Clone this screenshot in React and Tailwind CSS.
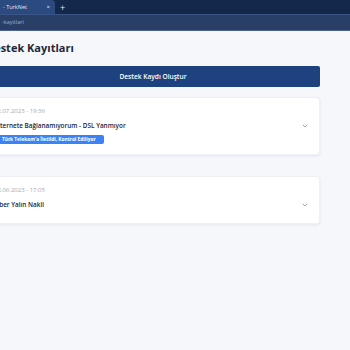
import React from 'react';
import { ChevronDown } from 'lucide-react';

// Destek kayıtları listesi
const tickets = [
    {
        date: '12.07.2023 - 19:36',
        title: 'İnternete Bağlanamıyorum - DSL Yanmıyor',
        status: "Türk Telekom'a İletildi, Kontrol Ediliyor",
    },
    {
        date: '28.06.2023 - 17:05',
        title: 'Fiber Yalın Nakil',
    },
];

const TicketCard = ({ ticket }) => (
    <div
        className={
            ticket.status
                ? 'bg-white rounded-[3px] shadow-[0_1px_3px_rgba(15,23,42,0.08)] border border-[#eef0f5] pl-[7px] pr-[10px] pt-[9px] pb-[10px] flex flex-col'
                : 'bg-white rounded-[3px] shadow-[0_1px_3px_rgba(15,23,42,0.08)] border border-[#eef0f5] pl-[7px] pr-[10px] pt-[9px] pb-[14px] flex flex-col'
        }
    >
        <span className="text-[6px] leading-[8px] text-[#a3a9b6]">{ticket.date}</span>
        <div className="mt-[6px] flex items-center">
            <span className="flex-1 text-[6.4px] leading-[9px] font-semibold text-[#1c2431]">{ticket.title}</span>
            <ChevronDown className="w-[8px] h-[8px] text-[#8b93a3]" strokeWidth={2.5} />
        </div>
        {ticket.status && (
            <span className="mt-[5px] self-start bg-[#3b82f6] text-white text-[4.8px] font-bold leading-[9px] px-[8px] rounded-[2px]">
                {ticket.status}
            </span>
        )}
    </div>
);

const App = () => {
    return (
        <div className="w-[350px] h-[350px] overflow-hidden bg-[#f6f7fb] font-['Open_Sans',sans-serif]">
            {/* Sekme çubuğu */}
            <div className="h-[14px] bg-[#14284c] flex items-end">
                <div className="h-[14px] w-[55px] bg-[#2a4a80] rounded-tr-[4px] flex items-center pl-[3px] pr-[5px]">
                    <span className="flex-1 text-[5.5px] text-[#e3e9f5]">- TurkNet</span>
                    <span className="text-[6px] text-[#e5ebf5] leading-none">×</span>
                </div>
                <span className="h-[14px] ml-[5px] flex items-center text-[9px] text-[#e5ebf5] leading-none">+</span>
            </div>
            {/* Adres çubuğu */}
            <div className="h-[17px] bg-[#2a3f66] border-t border-[#3b5586] border-b border-b-[#4b6396] flex items-center pl-[2px]">
                <span className="text-[5.5px] text-[#9fb0cf]">-kayitlari</span>
            </div>

            <div className="ml-[-14px] w-[334px] pt-[9px]">
                <h1 className="text-[11px] leading-[16px] font-bold text-[#1f2937]">Destek Kayıtları</h1>
                <button className="mt-[10px] w-full h-[21px] bg-[#1e4180] rounded-[2px] text-white text-[6.6px] font-semibold flex items-center justify-center">
                    Destek Kaydı Oluştur
                </button>
                <div className="mt-[10px] flex flex-col gap-[21px]">
                    {tickets.map((t, i) => (
                        <TicketCard key={i} ticket={t} />
                    ))}
                </div>
            </div>
        </div>
    );
};

export default App;
